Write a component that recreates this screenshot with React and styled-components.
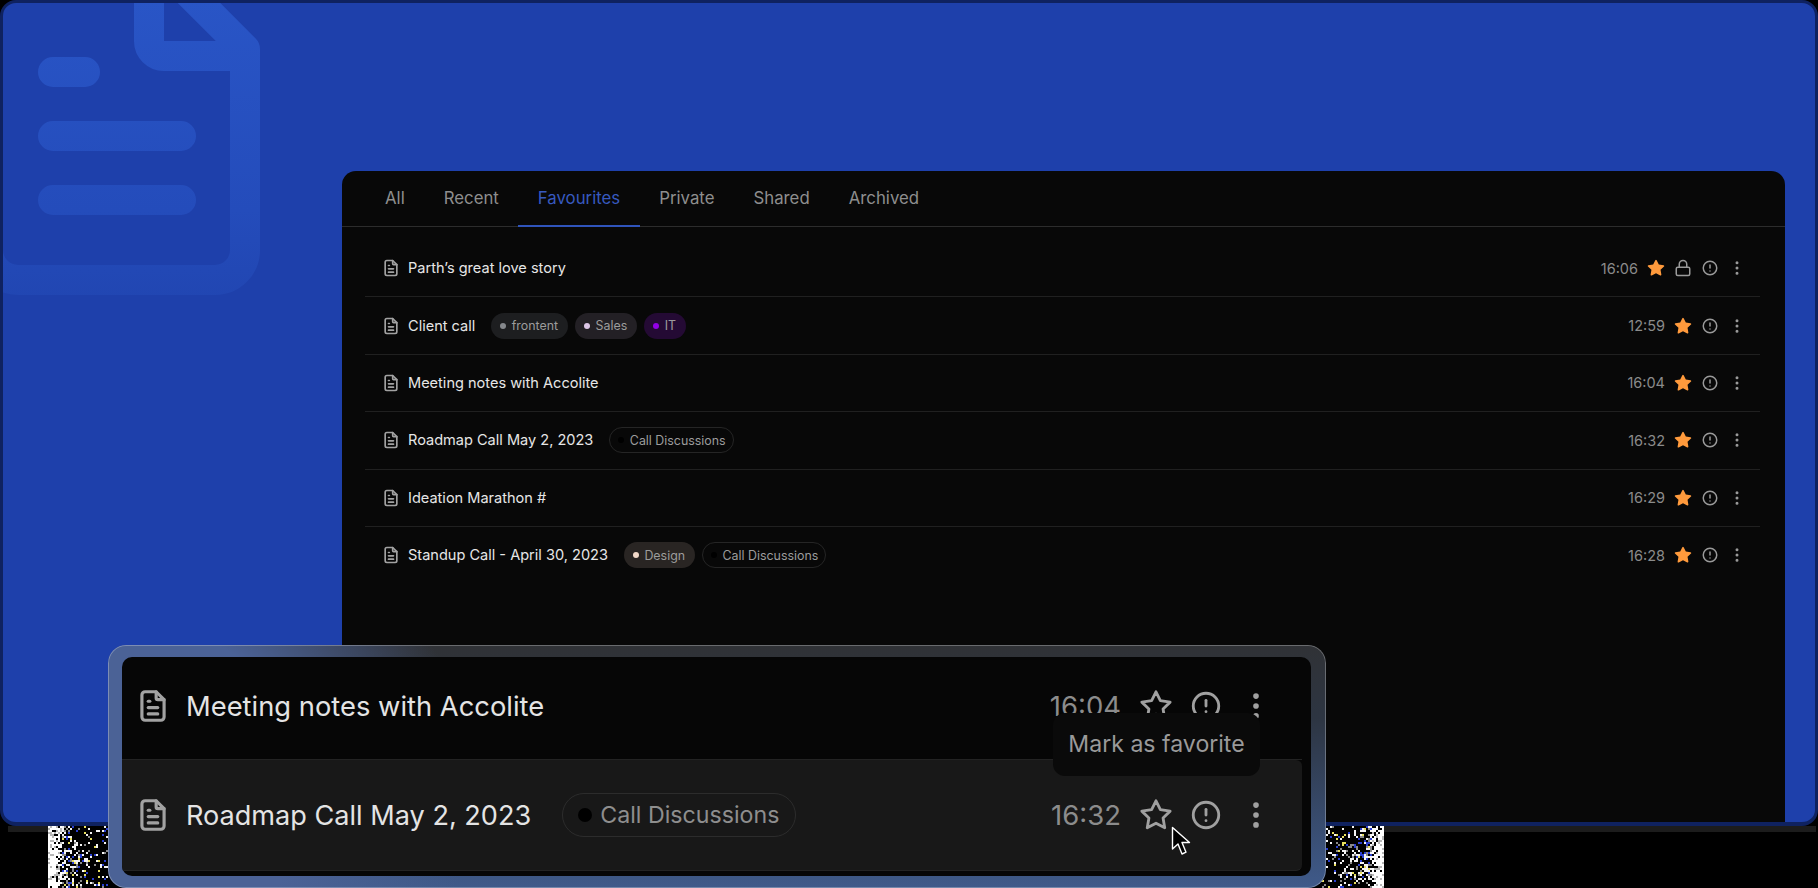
import React, { useMemo } from "react";
import styled, { createGlobalStyle } from "styled-components";
import { TbFileText, TbStar, TbStarFilled, TbAlertCircle, TbDotsVertical } from "react-icons/tb";
import { Lock } from "lucide-react";

const GlobalStyle = createGlobalStyle`
    html, body {
        margin: 0;
        background: #000;
    }
    * {
        box-sizing: border-box;
    }
`;

const Page = styled.div`
    position: relative;
    width: 1818px;
    height: 888px;
    overflow: hidden;
    background: #000;
    font-family: Inter, "Liberation Sans", sans-serif;
`;

const BlueCard = styled.div`
    position: relative;
    height: 826px;
    overflow: hidden;
    display: flex;
    justify-content: flex-end;
    padding: 168px 30px 0 0;
    background: #1e40ab;
    border: 3px solid #0f2260;
    border-bottom-width: 4px;
    border-radius: 16px;
`;

const Watermark = styled.svg`
    position: absolute;
    left: -3px;
    top: -3px;
`;

const Panel = styled.div`
    position: relative;
    width: 1443px;
    background: #080808;
    border-radius: 14px 14px 0 0;
`;

const Tabs = styled.div`
    display: flex;
    height: 56px;
    padding-left: 23.5px;
    border-bottom: 1px solid #2c2c2c;
`;

const Tab = styled.div`
    display: flex;
    align-items: center;
    height: 56px;
    padding: 0 19.5px;
    font-size: 16.8px;
    color: ${(p) => (p.$active ? "#3759bf" : "#8e8e8e")};
    border-bottom: 2px solid ${(p) => (p.$active ? "#2f54bb" : "transparent")};
`;

const List = styled.div`
    margin: 13px 25px 0 23px;
`;

const Row = styled.div`
    display: flex;
    align-items: center;
    height: 57.4px;
    padding: 0 14px 0 16px;
    border-bottom: 1px solid ${(p) => (p.$last ? "transparent" : "#202020")};
`;

const DocIcon = styled(TbFileText)`
    flex: none;
    color: #a2a2a2;
    margin-right: 7px;
`;

const Title = styled.span`
    font-size: 14.55px;
    color: #e6e6e6;
    white-space: nowrap;
    margin-right: 16px;
`;

const Tag = styled.span`
    display: flex;
    align-items: center;
    gap: 5.5px;
    height: 26px;
    padding: 0 ${(p) => (p.$line ? 7 : 9)}px 0 8px;
    margin-right: 7px;
    border-radius: 13px;
    font-size: 12.4px;
    color: #9c9c9c;
    background: ${(p) => p.$bg || "transparent"};
    border: 1px solid ${(p) => p.$line || "transparent"};
`;

const TagDot = styled.i`
    width: 6px;
    height: 6px;
    border-radius: 50%;
    background: ${(p) => p.$color};
`;

const Meta = styled.div`
    margin-left: auto;
    display: flex;
    align-items: center;
    gap: 9px;
    color: #9a9a9a;
`;

const Time = styled.span`
    font-size: 14.5px;
    color: #8b8b8b;
`;

const FavStar = styled(TbStarFilled)`
    color: #ff9a3c;
`;

const Footer = styled.div`
    display: flex;
    justify-content: space-between;
    height: 62px;
    margin: 0 2px 0 8px;
    padding: 0 432px 0 40px;
    background: linear-gradient(#1c1c1c, #1c1c1c) no-repeat 0 0 / 100% 6px;
`;

const Zoomed = styled.div`
    position: absolute;
    left: 108px;
    top: 645px;
    width: 1218px;
    height: 243px;
    padding: 12px 15px 12px 14px;
    border-radius: 18px;
    background:
        radial-gradient(ellipse 30% 130% at 0% 60%, #4b6296 55%, transparent 100%),
        linear-gradient(180deg, #303236 0%, #2d3542 30%, #3f5a8a 100%);
    box-shadow: inset 0 0 0 1px rgba(255, 255, 255, 0.28);
`;

const ZoomedInner = styled.div`
    display: flex;
    flex-direction: column;
    height: 219px;
    padding-right: 9px;
    border-radius: 10px;
    background: #060606;
    overflow: hidden;
`;

const ZoomedRow = styled.div`
    display: flex;
    align-items: center;
    flex: none;
    height: ${(p) => p.$height}px;
    padding: 0 29px ${(p) => p.$lift || 0}px 12px;
    background: ${(p) => p.$bg || "transparent"};
    border-radius: ${(p) => (p.$bg ? "0 6px 6px 0" : "0")};
    border-bottom: 1px solid #232323;
`;

const ZoomedDoc = styled(TbFileText)`
    flex: none;
    color: #a2a2a2;
    margin-right: 14px;
`;

const ZoomedTitle = styled.span`
    font-size: ${(p) => p.$size}px;
    color: #e4e4e4;
    white-space: nowrap;
    margin-right: 31px;
`;

const ZoomedTag = styled.span`
    display: flex;
    align-items: center;
    gap: 8px;
    height: 44px;
    padding: 0 16px 0 15px;
    border-radius: 22px;
    font-size: 23.2px;
    color: #8e8e8e;
    border: 1px solid #2c2c2c;
`;

const ZoomedDot = styled.i`
    width: 14px;
    height: 14px;
    border-radius: 50%;
    background: #000;
`;

const ZoomedMeta = styled.div`
    margin-left: auto;
    display: flex;
    align-items: center;
    gap: 16px;
    color: #a0a0a0;
`;

const ZoomedTime = styled.span`
    font-size: 27.5px;
    color: #8c8c8c;
    margin-right: 2px;
`;

const Tooltip = styled.div`
    position: absolute;
    left: 945px;
    top: 68px;
    width: 207px;
    height: 63px;
    display: flex;
    align-items: center;
    justify-content: center;
    padding-bottom: 2px;
    border-radius: 12px;
    background: #0a0a0a;
    color: #9a9a9a;
    font-size: 23.1px;
`;

const Cursor = styled.svg`
    position: absolute;
    left: 1063px;
    top: 181px;
`;

const tabs = ["All", "Recent", "Favourites", "Private", "Shared", "Archived"];

const callTag = { label: "Call Discussions", dot: "#000", line: "#252525" };

const notes = [
    { title: "Parth’s great love story", time: "16:06", locked: true },
    {
        title: "Client call",
        time: "12:59",
        tags: [
            { label: "frontent", dot: "#85888c", bg: "#1d1e20" },
            { label: "Sales", dot: "#dcc6e6", bg: "#232025" },
            { label: "IT", dot: "#9200e6", bg: "#240a34" },
        ],
    },
    { title: "Meeting notes with Accolite", time: "16:04" },
    { title: "Roadmap Call May 2, 2023", time: "16:32", tags: [callTag] },
    { title: "Ideation Marathon #", time: "16:29" },
    {
        title: "Standup Call - April 30, 2023",
        time: "16:28",
        tags: [{ label: "Design", dot: "#f2d9c9", bg: "#292523" }, callTag],
    },
];

// seeded so the static noise is the same on every load
const makeNoise = (width, height, flip, seed) => {
    let s = seed;
    const rand = () => {
        s = (s * 1664525 + 1013904223) % 4294967296;
        return s / 4294967296;
    };
    const cells = [];
    const size = 2;
    for (let y = 0; y < height; y += size) {
        for (let x = 0; x < width; x += size) {
            const t = flip ? x / width : 1 - x / width;
            const r = rand();
            const c = rand();
            let fill = "#000";
            if (r < 0.2 + 0.85 * t * t * t) {
                if (t > 0.8) fill = c < 0.25 ? "#b8b8b8" : "#fff";
                else if (c < 0.16) fill = "#2a3fd0";
                else if (c < 0.26) fill = "#e8e060";
                else if (c < 0.5) fill = "#8a8a8a";
                else fill = "#f4f4f4";
            }
            cells.push(<rect key={x + "-" + y} x={x} y={y} width={size} height={size} fill={fill} />);
        }
    }
    return cells;
};

const Noise = ({ width, flip, seed }) => {
    const cells = useMemo(() => makeNoise(width, 62, flip, seed), [width, flip, seed]);
    return (
        <svg width={width} height="62" shapeRendering="crispEdges">
            {cells}
        </svg>
    );
};

const App = () => {
    return (
        <Page>
            <GlobalStyle />
            <BlueCard>
                <Watermark width="300" height="320" fill="none">
                    <defs>
                        <linearGradient id="mark" gradientUnits="userSpaceOnUse" x1="0" y1="0" x2="0" y2="300">
                            <stop offset="0" stopColor="#2955c6" />
                            <stop offset="0.7" stopColor="#244cbb" />
                            <stop offset="1" stopColor="#2146b2" />
                        </linearGradient>
                    </defs>
                    <g stroke="url(#mark)" strokeWidth="30" strokeLinecap="round" strokeLinejoin="round">
                        <path d="M149 -20V41a15 15 0 0 0 15 15H245" />
                        <path d="M180 -16L245 49V250a30 30 0 0 1 -30 30H18a30 30 0 0 1 -30 -30V0" />
                        <path d="M53 72H85M53 136H181M53 200H181" />
                    </g>
                </Watermark>
                <Panel>
                    <Tabs>
                        {tabs.map((t) => (
                            <Tab key={t} $active={t === "Favourites"}>{t}</Tab>
                        ))}
                    </Tabs>
                    <List>
                        {notes.map((n, i) => (
                            <Row key={n.title} $last={i === notes.length - 1}>
                                <DocIcon size={20} />
                                <Title>{n.title}</Title>
                                {(n.tags || []).map((tag) => (
                                    <Tag key={tag.label} $bg={tag.bg} $line={tag.line}>
                                        <TagDot $color={tag.dot} />
                                        {tag.label}
                                    </Tag>
                                ))}
                                <Meta>
                                    <Time>{n.time}</Time>
                                    <FavStar size={18} />
                                    {n.locked && <Lock size={18} />}
                                    <TbAlertCircle size={18} />
                                    <TbDotsVertical size={18} />
                                </Meta>
                            </Row>
                        ))}
                    </List>
                </Panel>
            </BlueCard>
            <Footer>
                <Noise width={62} seed={11} />
                <Noise width={70} flip seed={29} />
            </Footer>
            <Zoomed>
                <ZoomedInner>
                    <ZoomedRow $height={103} $lift={4}>
                        <ZoomedDoc size={38} />
                        <ZoomedTitle $size={27.35}>Meeting notes with Accolite</ZoomedTitle>
                        <ZoomedMeta>
                            <ZoomedTime>16:04</ZoomedTime>
                            <TbStar size={34} />
                            <TbAlertCircle size={34} />
                            <TbDotsVertical size={34} />
                        </ZoomedMeta>
                    </ZoomedRow>
                    <ZoomedRow $height={111} $bg="#181818">
                        <ZoomedDoc size={38} />
                        <ZoomedTitle $size={27.1}>Roadmap Call May 2, 2023</ZoomedTitle>
                        <ZoomedTag>
                            <ZoomedDot />
                            Call Discussions
                        </ZoomedTag>
                        <ZoomedMeta>
                            <ZoomedTime>16:32</ZoomedTime>
                            <TbStar size={34} />
                            <TbAlertCircle size={34} />
                            <TbDotsVertical size={34} />
                        </ZoomedMeta>
                    </ZoomedRow>
                </ZoomedInner>
                <Tooltip>Mark as favorite</Tooltip>
                <Cursor width="20" height="30" viewBox="0 0 20 30">
                    <path d="M1.5 1.5V23L7 18l4 10 4-1.8-4-9.7h7.5z" fill="#000" stroke="#fff" strokeWidth="1.4" strokeLinejoin="round" />
                </Cursor>
            </Zoomed>
        </Page>
    );
};

export default App;
